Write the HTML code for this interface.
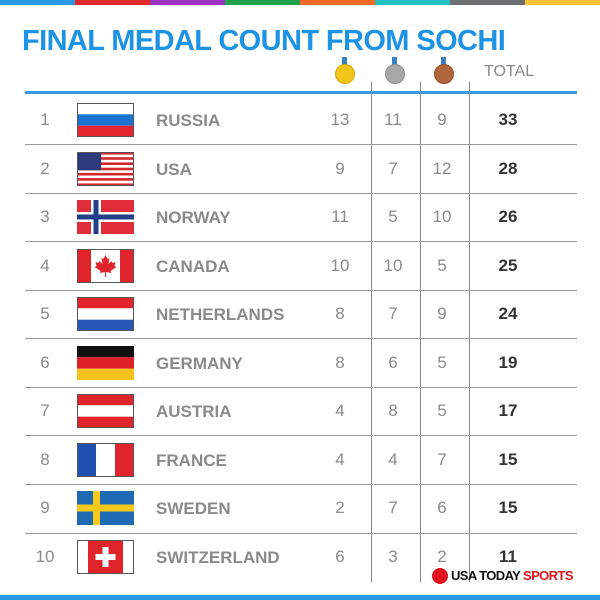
<!DOCTYPE html>
<html><head><meta charset="utf-8"><style>
*{margin:0;padding:0;box-sizing:border-box}
body{width:600px;height:600px;background:#fff;position:relative;overflow:hidden;font-family:"Liberation Sans",sans-serif}
.bar{position:absolute;top:0;height:5px;width:75px}
h1{position:absolute;left:22px;top:25px;font-size:29px;font-weight:bold;color:#1d93e6;letter-spacing:-0.6px;white-space:nowrap}
.hl{position:absolute;left:25px;width:552px;height:1px;background:#999}
.vl{position:absolute;top:82px;height:500px;width:1px;background:#888}
.row{position:absolute;left:0;width:600px;height:48px}
.rk{position:absolute;left:30px;width:30px;text-align:center;font-size:17px;color:#8a8a8a;top:14px}
.fl{position:absolute;left:77px;top:7px;width:57px;height:34px}
.cn{position:absolute;left:156px;top:15px;font-size:17px;font-weight:bold;color:#8a8a8a}
.n{position:absolute;top:14px;width:40px;text-align:center;font-size:17px;color:#8a8a8a}
.t{position:absolute;top:14px;left:488px;width:40px;text-align:center;font-size:17px;font-weight:bold;color:#333}
.medal{position:absolute;top:64px;width:20px;height:20px;border-radius:50%}
.rib{position:absolute;top:57px;width:5px;height:8px;background:#3a7fc0}
</style></head><body>
<div class="bar" style="left:0;background:#2c98e8"></div>
<div class="bar" style="left:75px;background:#e2282a"></div>
<div class="bar" style="left:150px;background:#9b32c0"></div>
<div class="bar" style="left:225px;background:#1fa24a"></div>
<div class="bar" style="left:300px;background:#f46b25"></div>
<div class="bar" style="left:375px;background:#22bfc0"></div>
<div class="bar" style="left:450px;background:#6d6e70"></div>
<div class="bar" style="left:525px;background:#f8c434"></div>
<h1>FINAL MEDAL COUNT FROM SOCHI</h1>
<div class="rib" style="left:342px"></div><div class="medal" style="left:335px;background:#f0c419;border:1px solid #d4a80c"></div>
<div class="rib" style="left:392px"></div><div class="medal" style="left:385px;background:#a8a8a8;border:1px solid #8c8c8c"></div>
<div class="rib" style="left:441px"></div><div class="medal" style="left:434px;background:#b0663a;border:1px solid #8e4f2a"></div>
<div style="position:absolute;left:484px;top:63px;font-size:16px;color:#888">TOTAL</div>
<div class="hl" style="top:91px;height:3px;background:#3a9ae6"></div>
<div class="vl" style="left:371px"></div><div class="vl" style="left:420px"></div><div class="vl" style="left:469px"></div>
<div class="hl" style="top:144px"></div><div class="hl" style="top:193px"></div><div class="hl" style="top:241px"></div>
<div class="hl" style="top:290px"></div><div class="hl" style="top:338px"></div><div class="hl" style="top:387px"></div>
<div class="hl" style="top:435px"></div><div class="hl" style="top:484px"></div><div class="hl" style="top:533px"></div>

<div class="row" style="top:96px"><div class="rk">1</div>
<svg class="fl" viewBox="0 0 57 34"><rect width="57" height="11.3" fill="#fff"/><rect y="11.3" width="57" height="11.4" fill="#1b75d0"/><rect y="22.7" width="57" height="11.3" fill="#e6262d"/><rect x=".5" y=".5" width="56" height="33" fill="none" stroke="#555"/></svg>
<div class="cn">RUSSIA</div><div class="n" style="left:320px">13</div><div class="n" style="left:373px">11</div><div class="n" style="left:422px">9</div><div class="t">33</div></div>

<div class="row" style="top:145px"><div class="rk">2</div>
<svg class="fl" viewBox="0 0 57 34"><rect width="57" height="34" fill="#fff"/><g fill="#d22630"><rect y="0" width="57" height="2.6"/><rect y="5.2" width="57" height="2.6"/><rect y="10.4" width="57" height="2.6"/><rect y="15.7" width="57" height="2.6"/><rect y="20.9" width="57" height="2.6"/><rect y="26.1" width="57" height="2.6"/><rect y="31.4" width="57" height="2.6"/></g><rect width="24" height="18.3" fill="#2c3a7e"/><rect x=".5" y=".5" width="56" height="33" fill="none" stroke="#555"/></svg>
<div class="cn">USA</div><div class="n" style="left:320px">9</div><div class="n" style="left:373px">7</div><div class="n" style="left:422px">12</div><div class="t">28</div></div>

<div class="row" style="top:193px"><div class="rk">3</div>
<svg class="fl" viewBox="0 0 57 34"><rect width="57" height="34" fill="#e12d39"/><rect x="14" width="10" height="34" fill="#fff"/><rect y="12" width="57" height="10" fill="#fff"/><rect x="16.5" width="5" height="34" fill="#213f89"/><rect y="14.5" width="57" height="5" fill="#213f89"/></svg>
<div class="cn">NORWAY</div><div class="n" style="left:320px">11</div><div class="n" style="left:373px">5</div><div class="n" style="left:422px">10</div><div class="t">26</div></div>

<div class="row" style="top:242px"><div class="rk">4</div>
<svg class="fl" viewBox="0 0 57 34"><rect width="57" height="34" fill="#fff"/><rect width="14" height="34" fill="#e0242b"/><rect x="43" width="14" height="34" fill="#e0242b"/><path d="M28.5 6l2 4 2-1-1 6 3-3 1 2 3-1-1 4 2 1-6 4 .5 2-5-1v5h-1v-5l-5 1 .5-2-6-4 2-1-1-4 3 1 1-2 3 3-1-6 2 1z" fill="#e0242b"/><rect x=".5" y=".5" width="56" height="33" fill="none" stroke="#555"/></svg>
<div class="cn">CANADA</div><div class="n" style="left:320px">10</div><div class="n" style="left:373px">10</div><div class="n" style="left:422px">5</div><div class="t">25</div></div>

<div class="row" style="top:290px"><div class="rk">5</div>
<svg class="fl" viewBox="0 0 57 34"><rect width="57" height="11.3" fill="#e0242b"/><rect y="11.3" width="57" height="11.4" fill="#fff"/><rect y="22.7" width="57" height="11.3" fill="#2657b4"/><rect x=".5" y=".5" width="56" height="33" fill="none" stroke="#555"/></svg>
<div class="cn">NETHERLANDS</div><div class="n" style="left:320px">8</div><div class="n" style="left:373px">7</div><div class="n" style="left:422px">9</div><div class="t">24</div></div>

<div class="row" style="top:339px"><div class="rk">6</div>
<svg class="fl" viewBox="0 0 57 34"><rect width="57" height="11.3" fill="#111"/><rect y="11.3" width="57" height="11.4" fill="#dd1f26"/><rect y="22.7" width="57" height="11.3" fill="#f6c21b"/></svg>
<div class="cn">GERMANY</div><div class="n" style="left:320px">8</div><div class="n" style="left:373px">6</div><div class="n" style="left:422px">5</div><div class="t">19</div></div>

<div class="row" style="top:387px"><div class="rk">7</div>
<svg class="fl" viewBox="0 0 57 34"><rect width="57" height="11.3" fill="#e0242b"/><rect y="11.3" width="57" height="11.4" fill="#fff"/><rect y="22.7" width="57" height="11.3" fill="#e0242b"/><rect x=".5" y=".5" width="56" height="33" fill="none" stroke="#555"/></svg>
<div class="cn">AUSTRIA</div><div class="n" style="left:320px">4</div><div class="n" style="left:373px">8</div><div class="n" style="left:422px">5</div><div class="t">17</div></div>

<div class="row" style="top:436px"><div class="rk">8</div>
<svg class="fl" viewBox="0 0 57 34"><rect width="19" height="34" fill="#1f4fb0"/><rect x="19" width="19" height="34" fill="#fff"/><rect x="38" width="19" height="34" fill="#e0242b"/><rect x=".5" y=".5" width="56" height="33" fill="none" stroke="#555"/></svg>
<div class="cn">FRANCE</div><div class="n" style="left:320px">4</div><div class="n" style="left:373px">4</div><div class="n" style="left:422px">7</div><div class="t">15</div></div>

<div class="row" style="top:484px"><div class="rk">9</div>
<svg class="fl" viewBox="0 0 57 34"><rect width="57" height="34" fill="#1f6bb3"/><rect x="16" width="7" height="34" fill="#f6c81b"/><rect y="13.5" width="57" height="7" fill="#f6c81b"/></svg>
<div class="cn">SWEDEN</div><div class="n" style="left:320px">2</div><div class="n" style="left:373px">7</div><div class="n" style="left:422px">6</div><div class="t">15</div></div>

<div class="row" style="top:533px"><div class="rk">10</div>
<svg class="fl" viewBox="0 0 57 34"><rect width="57" height="34" fill="#fff"/><rect x="11" width="35" height="34" fill="#e0242b"/><rect x="25.5" y="7" width="6" height="20" fill="#fff"/><rect x="18.5" y="14" width="20" height="6" fill="#fff"/><rect x=".5" y=".5" width="56" height="33" fill="none" stroke="#555"/></svg>
<div class="cn">SWITZERLAND</div><div class="n" style="left:320px">6</div><div class="n" style="left:373px">3</div><div class="n" style="left:422px">2</div><div class="t">11</div></div>

<div style="position:absolute;left:432px;top:568px;width:16px;height:16px;border-radius:50%;background:#e0141e"></div>
<div style="position:absolute;left:451px;top:568px;font-size:13px;font-weight:bold;color:#111;letter-spacing:-0.6px;white-space:nowrap">USA TODAY <span style="color:#e0141e">SPORTS</span></div>
<div style="position:absolute;left:0;top:595px;width:600px;height:5px;background:#2c98e8"></div>
</body></html>
